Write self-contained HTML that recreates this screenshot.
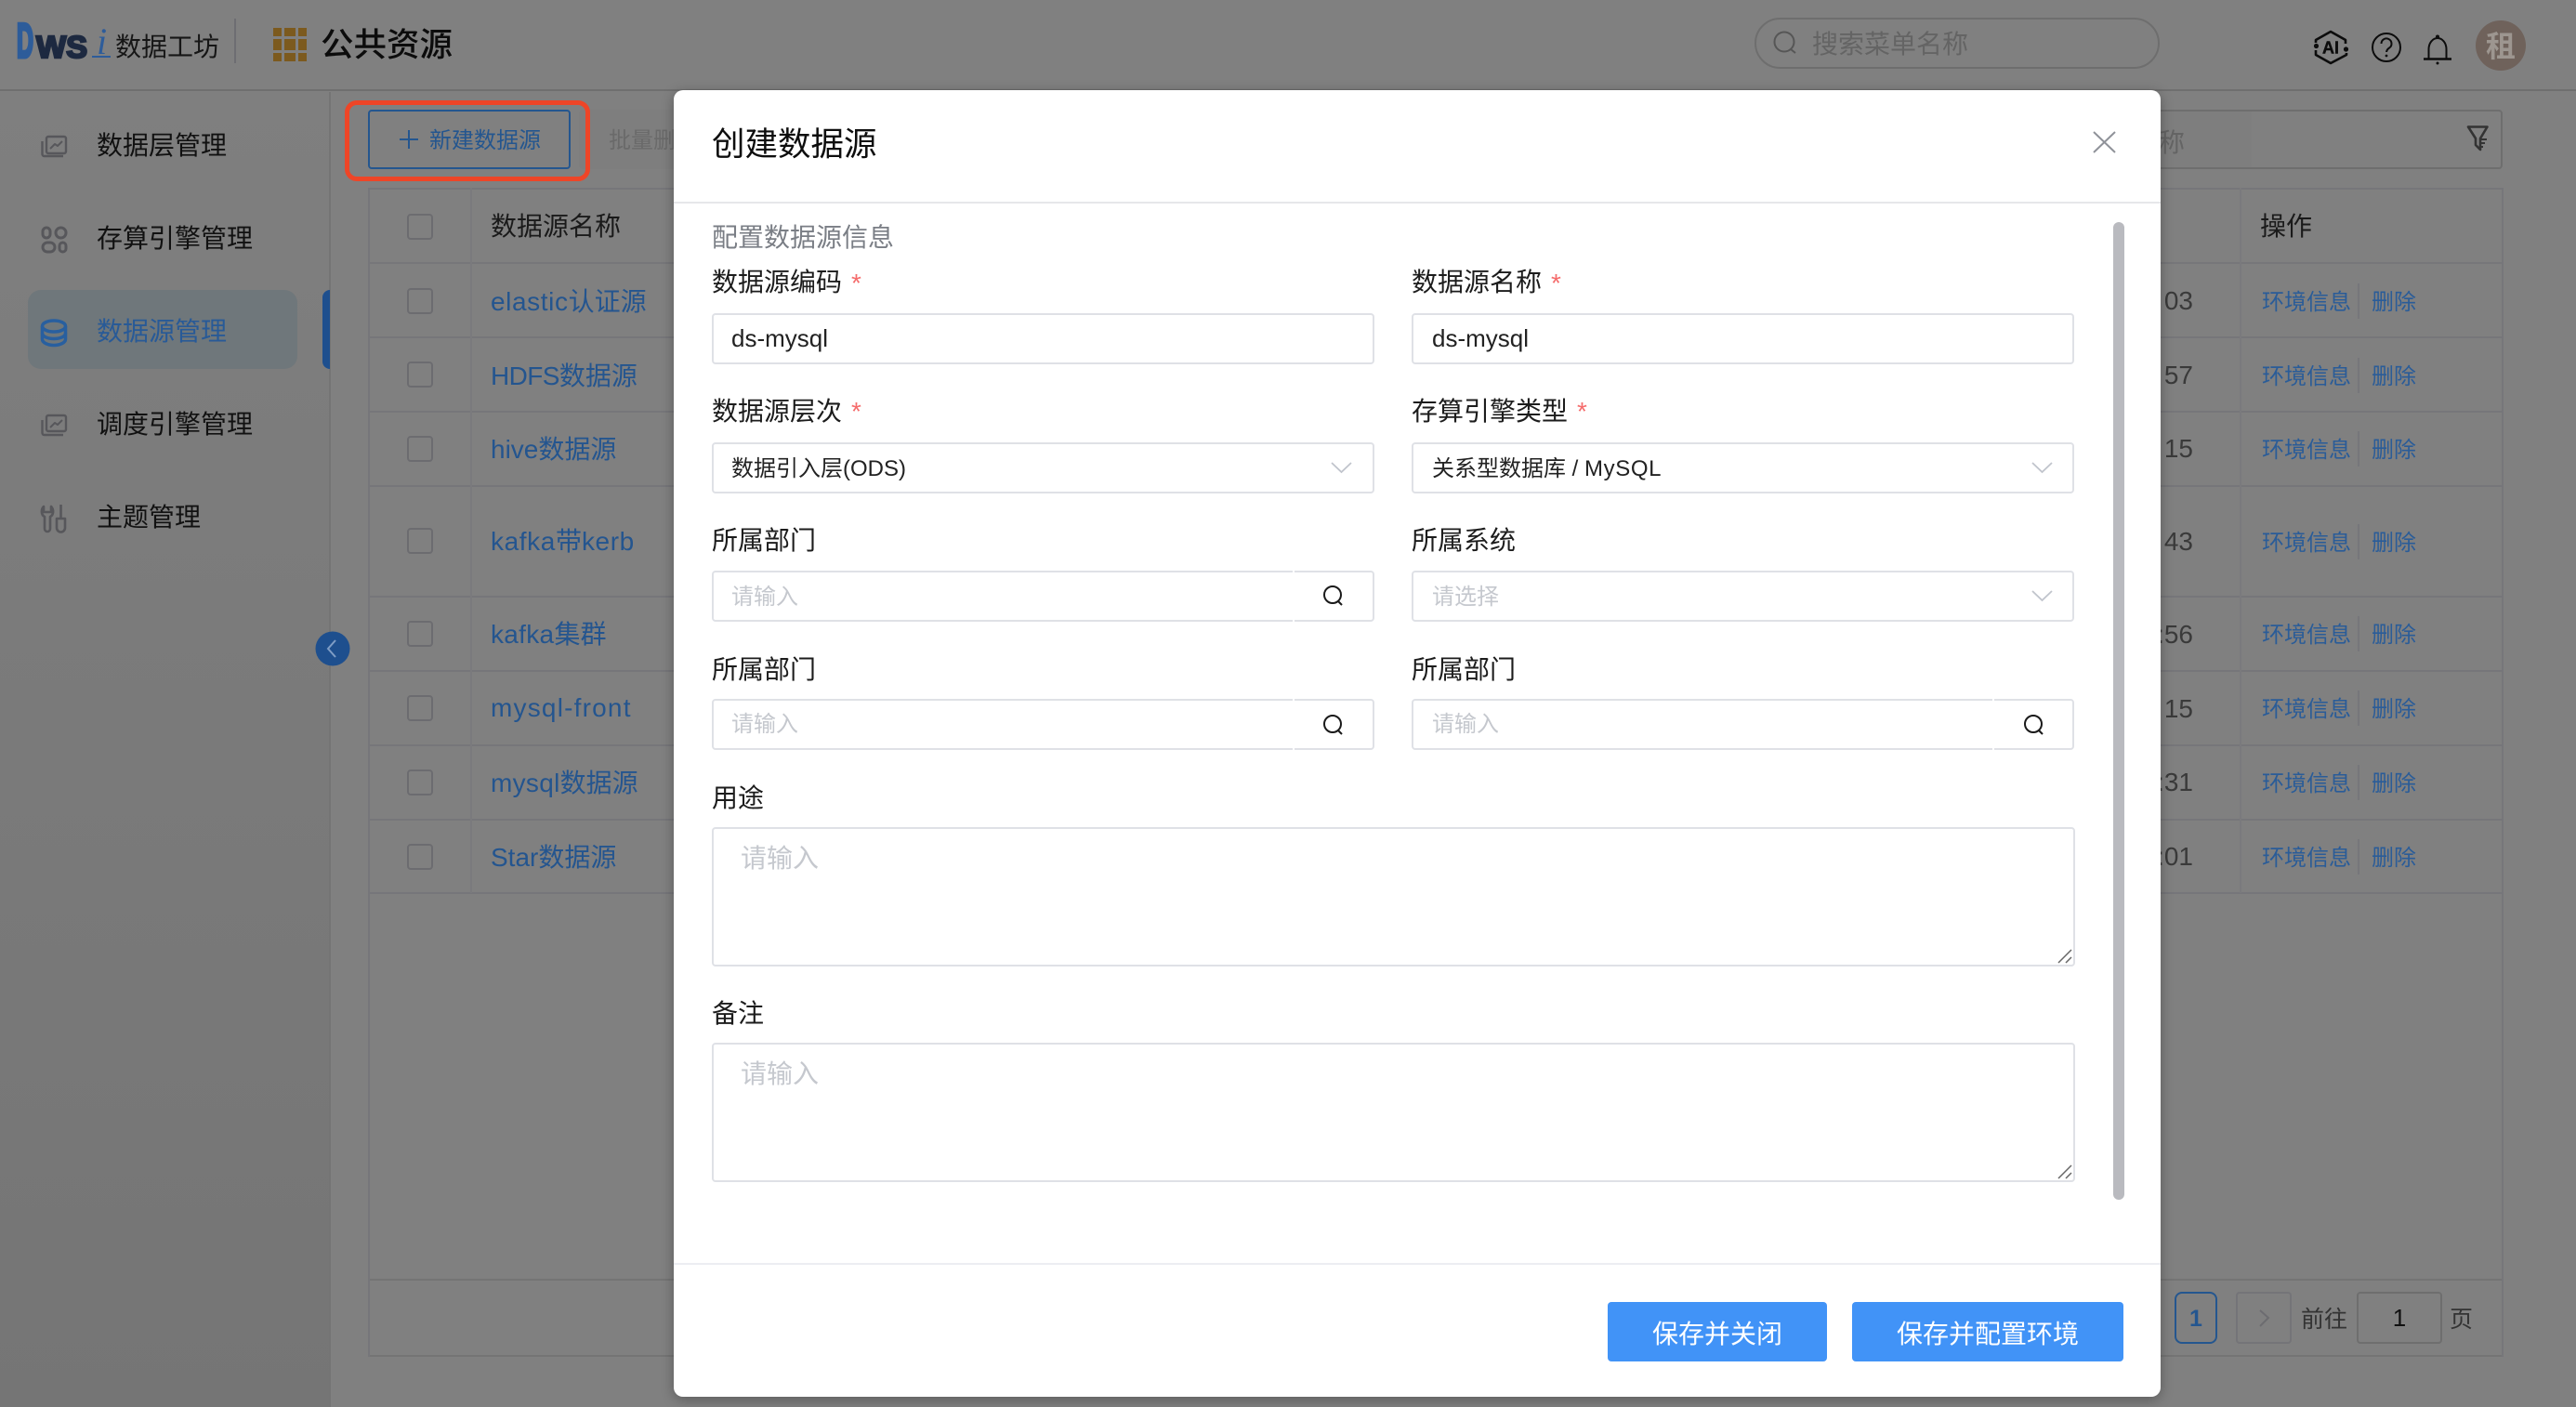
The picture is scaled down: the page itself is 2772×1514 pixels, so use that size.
<!DOCTYPE html>
<html lang="zh"><head><meta charset="utf-8"><title>创建数据源</title>
<style>
*{box-sizing:border-box;margin:0;padding:0}
html,body{width:2772px;height:1514px;overflow:hidden;background:#808080}
body{position:relative;font-family:"Liberation Sans","Noto Sans CJK SC",sans-serif;color:#1c1c1c}
.a{position:absolute}
.t{position:absolute;white-space:nowrap;line-height:40px;font-size:28px}
.l{position:absolute;background:#76767a}
.cb{position:absolute;left:438px;width:28px;height:28px;border:2px solid #6c6c70;border-radius:4px}
.n{color:#24558f;left:528px}
.n b{font-weight:400;letter-spacing:.6px}
.v{color:#3a3a3a;left:2200px;width:160px;text-align:right}
.e{color:#2a5c98;font-size:24px;left:2434px}
.d{color:#2a5c98;font-size:24px;left:2552px}
.s{position:absolute;left:2537px;width:2px;height:38px;background:#76767a}
.m .t{color:#1c1c1c}
.in{position:absolute;background:#fff;border:2px solid #dfe1e6;border-radius:4px;height:55px;width:713px}
.ph{color:#c5c8ce!important;font-size:24px!important}
.sv{font-size:24px!important;color:#222!important}
.star{color:#f56c6c!important;font-size:28px!important}
.notch{position:absolute;width:2px;height:2px;background:#fff}
svg{position:absolute;left:0;top:0}
</style></head><body>

<!-- top bar -->
<div class="a" style="left:0;top:0;width:2772px;height:98px;background:#808080;border-bottom:2px solid #6f6f6f"></div>
<div class="t" style="left:124px;top:31px;color:#161616">数据工坊</div>
<div class="a" style="left:252px;top:20px;width:2px;height:48px;background:#6d6d72"></div>
<div class="a" style="left:294px;top:30px;width:9px;height:9px;background:#7c5a1e"></div>
<div class="a" style="left:306px;top:30px;width:12px;height:9px;background:#7c5a1e"></div>
<div class="a" style="left:321px;top:30px;width:9px;height:9px;background:#7c5a1e"></div>
<div class="a" style="left:294px;top:42px;width:9px;height:12px;background:#7c5a1e"></div>
<div class="a" style="left:306px;top:42px;width:12px;height:12px;background:#7c5a1e"></div>
<div class="a" style="left:321px;top:42px;width:9px;height:12px;background:#7c5a1e"></div>
<div class="a" style="left:294px;top:57px;width:9px;height:9px;background:#7c5a1e"></div>
<div class="a" style="left:306px;top:57px;width:12px;height:9px;background:#7c5a1e"></div>
<div class="a" style="left:321px;top:57px;width:9px;height:9px;background:#7c5a1e"></div>
<div class="t" style="left:345px;top:28px;font-size:35.5px;font-weight:500;color:#0c0c0c">公共资源</div>
<div class="a" style="left:1888px;top:19px;width:436px;height:55px;border:2px solid #6e6e6e;border-radius:28px"></div>
<div class="t" style="left:1950px;top:28px;color:#646464">搜索菜单名称</div>
<div class="a" style="left:2664px;top:22px;width:54px;height:54px;border-radius:50%;background:#6f625b"></div>
<div class="t" style="left:2675px;top:30px;font-size:32px;font-weight:700;color:#9d9690">租</div>

<!-- sidebar -->
<div class="a" style="left:0;top:99px;width:356px;height:1415px;background:linear-gradient(180deg,#7f7f7f,#757575);border-right:2px solid #747474"></div>
<div class="a" style="left:30px;top:312px;width:290px;height:85px;background:#6f777b;border-radius:14px"></div>
<div class="a" style="left:347px;top:312px;width:8px;height:85px;background:#1e4f8e;border-radius:8px 0 0 8px"></div>
<div class="t" style="left:104px;top:137px;color:#111">数据层管理</div>
<div class="t" style="left:104px;top:237px;color:#111">存算引擎管理</div>
<div class="t" style="left:104px;top:337px;color:#285a97">数据源管理</div>
<div class="t" style="left:104px;top:437px;color:#111">调度引擎管理</div>
<div class="t" style="left:104px;top:537px;color:#111">主题管理</div>

<!-- toolbar -->
<div class="a" style="left:623px;top:118px;width:1800px;height:64px;background:#7e7e7e;border-radius:4px"></div>
<div class="a" style="left:396px;top:118px;width:218px;height:64px;border:2px solid #24568f;border-radius:4px;background:#808080"></div>
<div class="t" style="left:462px;top:132px;font-size:24px;color:#24568f">新建数据源</div>
<div class="t" style="left:655px;top:132px;font-size:24px;color:#6a6a6a">批量删除</div>
<div class="a" style="left:2000px;top:118px;width:693px;height:64px;border:2px solid #6e6e6e;border-radius:4px"></div>
<div class="t" style="left:2295px;top:134px;color:#646464">名称</div>

<!-- table -->
<div class="l" style="left:396px;top:202px;width:2297px;height:2px"></div>
<div class="l" style="left:396px;top:282px;width:2297px;height:2px"></div>
<div class="l" style="left:396px;top:362px;width:2297px;height:2px"></div>
<div class="l" style="left:396px;top:442px;width:2297px;height:2px"></div>
<div class="l" style="left:396px;top:522px;width:2297px;height:2px"></div>
<div class="l" style="left:396px;top:641px;width:2297px;height:2px"></div>
<div class="l" style="left:396px;top:721px;width:2297px;height:2px"></div>
<div class="l" style="left:396px;top:801px;width:2297px;height:2px"></div>
<div class="l" style="left:396px;top:881px;width:2297px;height:2px"></div>
<div class="l" style="left:396px;top:960px;width:2297px;height:2px"></div>
<div class="l" style="left:396px;top:1376px;width:2297px;height:2px;background:#747474"></div>
<div class="l" style="left:396px;top:1458px;width:2297px;height:2px;background:#747474"></div>
<div class="l" style="left:396px;top:202px;width:2px;height:1258px"></div>
<div class="l" style="left:506px;top:202px;width:2px;height:759px;background:#7a7a7d"></div>
<div class="l" style="left:2410px;top:202px;width:2px;height:759px;background:#7a7a7d"></div>
<div class="l" style="left:2692px;top:202px;width:2px;height:1258px"></div>

<div class="cb" style="top:230px"></div><div class="cb" style="top:310px"></div><div class="cb" style="top:389px"></div><div class="cb" style="top:469px"></div><div class="cb" style="top:568px"></div><div class="cb" style="top:668px"></div><div class="cb" style="top:748px"></div><div class="cb" style="top:828px"></div><div class="cb" style="top:908px"></div>

<div class="t" style="left:528px;top:224px;color:#1a1a1a">数据源名称</div>
<div class="t n" style="top:305px"><b>elastic</b>认证源</div>
<div class="t n" style="top:385px;"><b style="letter-spacing:-.6px">HDFS</b>数据源</div>
<div class="t n" style="top:464px">hive数据源</div>
<div class="t n" style="top:563px"><b>kafka</b>带<b>kerb</b></div>
<div class="t n" style="top:663px"><b style="letter-spacing:.3px">kafka</b>集群</div>
<div class="t n" style="top:742px;letter-spacing:1.2px">mysql-front</div>
<div class="t n" style="top:823px"><b style="letter-spacing:.3px">mysql</b>数据源</div>
<div class="t n" style="top:903px">Star数据源</div>

<div class="t" style="left:2432px;top:224px;color:#1a1a1a">操作</div>
<div class="t v" style="top:304px">03</div>
<div class="t v" style="top:384px">57</div>
<div class="t v" style="top:463px">15</div>
<div class="t v" style="top:563px">43</div>
<div class="t v" style="top:663px">:56</div>
<div class="t v" style="top:743px">15</div>
<div class="t v" style="top:822px">:31</div>
<div class="t v" style="top:902px">:01</div>

<div class="t e" style="top:306px">环境信息</div><div class="s" style="top:305px"></div><div class="t d" style="top:306px">删除</div>
<div class="t e" style="top:386px">环境信息</div><div class="s" style="top:385px"></div><div class="t d" style="top:386px">删除</div>
<div class="t e" style="top:465px">环境信息</div><div class="s" style="top:464px"></div><div class="t d" style="top:465px">删除</div>
<div class="t e" style="top:565px">环境信息</div><div class="s" style="top:564px"></div><div class="t d" style="top:565px">删除</div>
<div class="t e" style="top:664px">环境信息</div><div class="s" style="top:663px"></div><div class="t d" style="top:664px">删除</div>
<div class="t e" style="top:744px">环境信息</div><div class="s" style="top:743px"></div><div class="t d" style="top:744px">删除</div>
<div class="t e" style="top:824px">环境信息</div><div class="s" style="top:823px"></div><div class="t d" style="top:824px">删除</div>
<div class="t e" style="top:904px">环境信息</div><div class="s" style="top:903px"></div><div class="t d" style="top:904px">删除</div>

<!-- pagination -->
<div class="a" style="left:2340px;top:1390px;width:46px;height:56px;border:2px solid #24568f;border-radius:8px"></div>
<div class="t" style="left:2340px;width:46px;text-align:center;top:1399px;font-size:25px;font-weight:700;color:#24568f">1</div>
<div class="a" style="left:2406px;top:1390px;width:60px;height:56px;border:2px solid #747478;border-radius:4px"></div>
<div class="t" style="left:2476px;top:1400px;font-size:25px;color:#333">前往</div>
<div class="a" style="left:2536px;top:1390px;width:92px;height:56px;border:2px solid #6e6e6e;border-radius:4px"></div>
<div class="t" style="left:2536px;width:92px;text-align:center;top:1398px;font-size:26px;color:#111">1</div>
<div class="t" style="left:2636px;top:1400px;font-size:25px;color:#333">页</div>

<!-- background svg: logo and icons -->
<svg width="2772" height="1514" viewBox="0 0 2772 1514" fill="none" style="z-index:1">
 <text x="18" y="61.500" font-family="Liberation Sans" font-weight="bold" font-size="52" fill="#2d5c9a" stroke="#2d5c9a" stroke-width="4" textLength="18" lengthAdjust="spacingAndGlyphs">D</text>
 <text x="39" y="62" font-family="Liberation Sans" font-weight="bold" font-size="33" fill="#1d2940" stroke="#1d2940" stroke-width="2.400" textLength="55" lengthAdjust="spacingAndGlyphs">WS</text>
 <text x="104" y="58" font-family="Liberation Serif" font-style="italic" font-size="40" fill="#2d5c9a">i</text>
 <rect x="99" y="60" width="20" height="2" fill="#2d5c9a"/>
 <!-- header search -->
 <circle cx="1920" cy="45" r="10.5" stroke="#565656" stroke-width="2"/><path d="M1927 53l5 4" stroke="#565656" stroke-width="2"/>
 <!-- AI -->
 <path d="M2492 46V43L2508 34L2524 43V47M2525 57V59L2508 68L2492 59V54" stroke="#0c0c0c" stroke-width="2.600" stroke-linejoin="round"/>
 <circle cx="2492.5" cy="49.5" r="2.600" fill="#0c0c0c"/><circle cx="2524.5" cy="53" r="2.600" fill="#0c0c0c"/>
 <text x="2508" y="57.5" text-anchor="middle" font-family="Liberation Sans" font-size="18" font-weight="bold" fill="#0c0c0c" stroke="#0c0c0c" stroke-width=".4">AI</text>
 <!-- help -->
 <circle cx="2568" cy="51" r="15" stroke="#0c0c0c" stroke-width="2"/>
 <path d="M2562.5 47a5.5 5.5 0 1 1 8.6 4.5c-2 1.4-3 2.4-3 4.5" stroke="#0c0c0c" stroke-width="2"/><circle cx="2568" cy="60" r="1.4" fill="#0c0c0c"/>
 <!-- bell -->
 <path d="M2613.500 63V53a9.500 12 0 0 1 19 0V63" stroke="#0c0c0c" stroke-width="2"/>
 <path d="M2608 63.500H2638" stroke="#0c0c0c" stroke-width="2.4"/><circle cx="2623" cy="39.500" r="2" fill="#0c0c0c"/><circle cx="2623" cy="68" r="1.500" fill="#0c0c0c"/>
 <!-- sidebar icon 1 -->
 <g stroke="#57575b" stroke-width="2.400" stroke-linejoin="round">
  <rect x="50" y="147" width="21" height="18" rx="2"/>
  <path d="M45.500 152V166a2 2 0 0 0 2 2H68"/>
  <path d="M54 160l5-5 3 2 5-5" stroke-width="2"/>
 </g>
 <!-- sidebar icon 2 -->
 <g stroke="#57575b" stroke-width="3">
  <rect x="46" y="245" width="8" height="11" rx="4"/>
  <rect x="60" y="245" width="11" height="11" rx="5.500"/>
  <rect x="46" y="261" width="13" height="10" rx="5"/>
  <rect x="64" y="261" width="7" height="10" rx="3.500"/>
 </g>
 <!-- sidebar icon 3 -->
 <g stroke="#285f9f" stroke-width="3.500">
  <ellipse cx="58" cy="351" rx="12.500" ry="6"/>
  <path d="M45.500 351V365c0 3.500 5.500 6.500 12.500 6.500s12.500-3 12.500-6.500V351"/>
  <path d="M45.500 358.500c0 3.500 5.500 6 12.500 6s12.500-2.500 12.500-6"/>
 </g>
 <!-- sidebar icon 4 -->
 <g stroke="#57575b" stroke-width="2.400" stroke-linejoin="round">
  <rect x="50" y="447" width="21" height="17" rx="2"/>
  <path d="M45.500 452V466a2 2 0 0 0 2 2H68"/>
  <path d="M54 460l5-5 3 2 5-5" stroke-width="2"/>
 </g>
 <!-- sidebar icon 5 -->
 <g stroke="#57575b" stroke-width="2.600" stroke-linejoin="round">
  <path d="M47 545c-3 3-3 9 1 11v13a3 3 0 0 0 6 0V556c4-2 4-8 1-11v6h-8z"/>
  <path d="M65.500 543V557M61 558h9v10a4.500 4.500 0 0 1-9 0z"/>
 </g>
 <!-- collapse btn -->
 <circle cx="358" cy="698" r="18.500" fill="#1e4f8e"/>
 <path d="M361 689l-8 9 8 9" stroke="#7f9dc5" stroke-width="2"/>
 <!-- plus -->
 <path d="M440 140V160M430 150H450" stroke="#24568f" stroke-width="2"/>
 <!-- filter -->
 <path d="M2656 136.500H2676.500L2669 149V161L2664 156V149Z" stroke="#333" stroke-width="2.600" stroke-linejoin="round"/>
 <path d="M2668 150h8M2668 154h6M2668 158h4" stroke="#333" stroke-width="2"/>
 <!-- pager chevron -->
 <path d="M2432 1410l9 8-9 9" stroke="#6c6c70" stroke-width="2"/>
</svg>

<!-- red annotation -->
<div class="a" style="left:371px;top:108px;width:264px;height:87px;border:5px solid #ee4527;border-radius:13px;z-index:2"></div>

<!-- modal -->
<div class="a m" style="left:725px;top:97px;width:1600px;height:1406px;background:#fff;border-radius:10px;box-shadow:0 3px 14px rgba(0,0,0,.3);z-index:3">
 <div class="a" style="left:0;top:120px;width:1600px;height:2px;background:#e6e7ea"></div>
 <div class="a" style="left:0;top:1262px;width:1600px;height:2px;background:#ecedf2"></div>
 <div class="a" style="left:1549px;top:142px;width:12px;height:1052px;border-radius:6px;background:#b9babf"></div>

 <div class="t" style="left:41px;top:38px;font-size:35.500px;color:#0e0e0e">创建数据源</div>
 <div class="t" style="left:41px;top:139px;color:#7a7e85">配置数据源信息</div>

 <div class="t" style="left:41px;top:187px">数据源编码</div><div class="t star" style="left:191px;top:188px">*</div>
 <div class="t" style="left:794px;top:187px">数据源名称</div><div class="t star" style="left:944px;top:188px">*</div>
 <div class="in" style="left:41px;top:240px"></div>
 <div class="in" style="left:794px;top:240px"></div>
 <div class="t sv" style="left:62px;top:247px;font-size:26px!important">ds-mysql</div>
 <div class="t sv" style="left:816px;top:247px;font-size:26px!important">ds-mysql</div>

 <div class="t" style="left:41px;top:326px">数据源层次</div><div class="t star" style="left:191px;top:326px">*</div>
 <div class="t" style="left:794px;top:326px">存算引擎类型</div><div class="t star" style="left:972px;top:326px">*</div>
 <div class="in" style="left:41px;top:379px"></div>
 <div class="in" style="left:794px;top:379px"></div>
 <div class="t sv" style="left:62px;top:388px">数据引入层(ODS)</div>
 <div class="t sv" style="left:816px;top:388px">关系型数据库 / <span style="letter-spacing:.6px">MySQL</span></div>

 <div class="t" style="left:41px;top:465px">所属部门</div>
 <div class="t" style="left:794px;top:465px">所属系统</div>
 <div class="in" style="left:41px;top:517px"></div>
 <div class="in" style="left:794px;top:517px"></div>
 <div class="notch" style="left:666px;top:517px"></div><div class="notch" style="left:666px;top:570px"></div>
 <div class="t ph" style="left:62px;top:526px">请输入</div>
 <div class="t ph" style="left:816px;top:526px">请选择</div>

 <div class="t" style="left:41px;top:604px">所属部门</div>
 <div class="t" style="left:794px;top:604px">所属部门</div>
 <div class="in" style="left:41px;top:655px"></div>
 <div class="in" style="left:794px;top:655px"></div>
 <div class="notch" style="left:666px;top:655px"></div><div class="notch" style="left:666px;top:708px"></div>
 <div class="notch" style="left:1419px;top:655px"></div><div class="notch" style="left:1419px;top:708px"></div>
 <div class="t ph" style="left:62px;top:663px">请输入</div>
 <div class="t ph" style="left:816px;top:663px">请输入</div>

 <div class="t" style="left:41px;top:742px">用途</div>
 <div class="in" style="left:41px;top:793px;height:150px;width:1467px"></div>
 <div class="t ph" style="left:72px;top:807px;font-size:28px!important">请输入</div>

 <div class="t" style="left:41px;top:974px">备注</div>
 <div class="in" style="left:41px;top:1025px;height:150px;width:1467px"></div>
 <div class="t ph" style="left:72px;top:1039px;font-size:28px!important">请输入</div>

 <div class="a" style="left:1005px;top:1304px;width:236px;height:64px;background:#4193f7;border-radius:4px"></div>
 <div class="a" style="left:1268px;top:1304px;width:292px;height:64px;background:#4193f7;border-radius:4px"></div>
 <div class="t" style="left:1005px;width:236px;text-align:center;top:1319px;color:#fff!important">保存并关闭</div>
 <div class="t" style="left:1268px;width:292px;text-align:center;top:1319px;color:#fff!important">保存并配置环境</div>

 <svg width="1600" height="1406" viewBox="0 0 1600 1406" fill="none">
  <!-- close -->
  <path d="M1528 45L1551 67M1551 45L1528 67" stroke="#8f9299" stroke-width="2"/>
  <!-- selects -->
  <path d="M708 401l10.500 10 10.500-10M1462 401l10.500 10 10.500-10M1462 539l10.500 10 10.500-10" stroke="#c0c4cc" stroke-width="1.800"/>
  <!-- search icons -->
  <g stroke="#1a1a1a" stroke-width="2">
   <circle cx="709" cy="543" r="9"/><path d="M715 550l4 4"/>
   <circle cx="709" cy="682" r="9"/><path d="M715 689l4 4"/>
   <circle cx="1463" cy="682" r="9"/><path d="M1469 689l4 4"/>
  </g>
  <!-- resize handles -->
  <g stroke="#666" stroke-width="1.500">
   <path d="M1490 939L1504 925M1498 939L1504 933M1490 1171L1504 1157M1498 1171L1504 1165"/>
  </g>
 </svg>
</div>
</body></html>
